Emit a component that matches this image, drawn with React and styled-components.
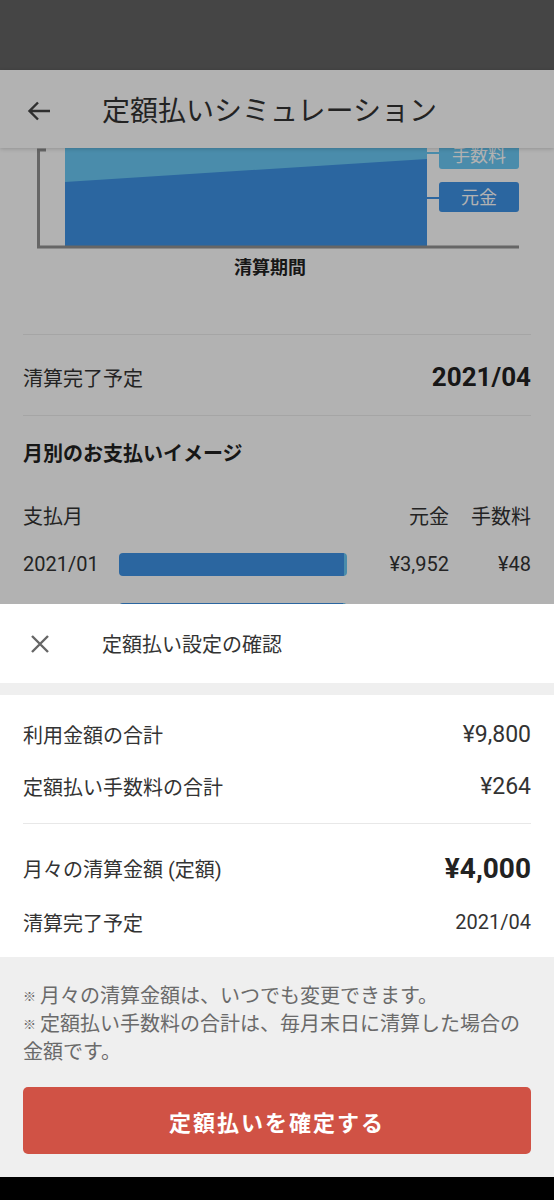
import React from "react";
import styled, { createGlobalStyle } from "styled-components";

const GlobalStyle = createGlobalStyle`
  html, body {
    margin: 0;
    padding: 0;
    background: #000;
  }
  body {
    font-family: Roboto, "Noto Sans CJK JP", sans-serif;
    color: #333;
  }
  * {
    box-sizing: border-box;
  }
`;

const PRINCIPAL = "#3e92e5";
const FEE = "#6ac9f5";
const AXIS = "#929292";

const Device = styled.div`
  width: 554px;
  height: 1200px;
  display: flex;
  flex-direction: column;
  overflow: hidden;
  background: #fff;
`;

const Screen = styled.div`
  position: relative;
  height: 1177px;
  display: flex;
  flex-direction: column;
  overflow: hidden;
  background: #fff;
`;

const StatusBar = styled.div`
  height: 70px;
  flex-shrink: 0;
  background: #636363;
`;

const AppBar = styled.header`
  position: relative;
  z-index: 1;
  height: 78px;
  flex-shrink: 0;
  display: flex;
  align-items: center;
  padding: 3px 0 0 27px;
  background: #fff;
  box-shadow: 0 1px 4px rgba(0, 0, 0, 0.18);
`;

const IconButton = styled.span`
  display: flex;
  align-items: center;
  justify-content: center;
  width: 24px;
  height: 24px;
  flex-shrink: 0;
`;

const AppTitle = styled.h1`
  margin: 2px 0 0 51px;
  font-size: 28px;
  font-weight: 400;
  color: #333;
  line-height: 1;
`;

const Content = styled.main`
  display: flex;
  flex-direction: column;
`;

const ChartBox = styled.div`
  height: 102px;
  flex-shrink: 0;
`;

const AxisLabel = styled.div`
  margin: 8px 0 56px;
  padding-right: 14px;
  text-align: center;
  font-size: 18px;
  font-weight: 700;
  line-height: 20px;
  color: #222;
`;

const Divider = styled.div`
  height: 1px;
  margin: 0 23px;
  background: #ececec;
`;

const SummaryRow = styled.div`
  height: 80px;
  padding: 4px 23px 0;
  display: flex;
  align-items: center;
  justify-content: space-between;
`;

const Label = styled.span`
  font-size: 20px;
  color: #333;
`;

const BigValue = styled.span`
  font-size: ${(p) => p.$size || 26}px;
  font-weight: 700;
  color: #222;
`;

const Value = styled.span`
  font-size: ${(p) => p.$size || 20}px;
  color: #333;
`;

const Heading = styled.h2`
  margin: 0;
  padding: 24px 23px 0;
  font-size: 20px;
  font-weight: 700;
  line-height: 28px;
  color: #222;
`;

const Table = styled.div`
  margin-top: 33px;
  padding: 0 23px;
`;

const TableRow = styled.div`
  display: grid;
  grid-template-columns: 96px 228px 1fr 82px;
  align-items: center;
  height: ${(p) => (p.$head ? 28 : 50)}px;
  margin-bottom: ${(p) => (p.$head ? 10 : 0)}px;
  font-size: 20px;
  color: #333;
`;

const Cell = styled.span`
  text-align: ${(p) => (p.$right ? "right" : "left")};
  white-space: nowrap;
`;

const BarTrack = styled.div`
  display: flex;
  height: 23px;
  border-radius: 4px;
  overflow: hidden;
`;

const BarSegment = styled.div`
  height: 100%;
  background: ${(p) => (p.$fee ? FEE : PRINCIPAL)};
`;

const Scrim = styled.div`
  position: absolute;
  inset: 0;
  z-index: 2;
  background: rgba(0, 0, 0, 0.3);
`;

const Sheet = styled.section`
  position: absolute;
  left: 0;
  right: 0;
  bottom: 0;
  z-index: 3;
  display: flex;
  flex-direction: column;
  background: #efefef;
`;

const SheetHeader = styled.div`
  height: 79px;
  display: flex;
  align-items: center;
  padding-left: 28px;
  background: #fff;
  margin-bottom: 12px;
`;

const SheetTitle = styled.h3`
  margin: 0 0 0 50px;
  font-size: 20px;
  font-weight: 400;
  color: #333;
`;

const Card = styled.div`
  background: #fff;
  padding: 0 23px;
`;

const Group = styled.div`
  padding: ${(p) => p.$pad};
`;

const InfoRow = styled.div`
  height: ${(p) => p.$h}px;
  display: flex;
  align-items: center;
  justify-content: space-between;
`;

const CardDivider = styled.div`
  height: 1px;
  background: #e8e8e8;
`;

const Footer = styled.div`
  padding: 25px 23px 23px;
`;

const Note = styled.p`
  margin: 0;
  font-size: 20px;
  line-height: 28px;
  color: #6a6a6a;
`;

const Mark = styled.span`
  display: inline-block;
  width: 17px;
  font-size: 13px;
  line-height: 1;
  vertical-align: 2px;
`;

const ConfirmButton = styled.button`
  display: block;
  width: 100%;
  height: 67px;
  margin-top: 21px;
  border: none;
  border-radius: 5px;
  background: #d05245;
  color: #fff;
  font-family: Roboto, "Noto Sans CJK JP", sans-serif;
  font-size: 22px;
  font-weight: 700;
  letter-spacing: 2px;
  cursor: pointer;
`;

const NavBar = styled.div`
  flex: 1;
  background: #000;
`;

const months = [
  { month: "2021/01", principal: 3952, fee: 48 },
  { month: "2021/02", principal: 3931, fee: 69 },
  { month: "2021/03", principal: 1917, fee: 83 },
];

function BackArrow() {
  return (
    <svg width="24" height="22" viewBox="0 0 24 22" fill="none">
      <path
        d="M23 11H2.8M11 2.5L2.5 11L11 19.5"
        stroke="#444"
        strokeWidth="2.4"
      />
    </svg>
  );
}

function CloseIcon() {
  return (
    <svg width="20" height="20" viewBox="0 0 20 20" fill="none">
      <path d="M2 2L18 18M18 2L2 18" stroke="#666" strokeWidth="2.4" />
    </svg>
  );
}

function PeriodChart() {
  const font = 'Roboto, "Noto Sans CJK JP", sans-serif';
  return (
    <svg width="554" height="102" viewBox="0 0 554 102">
      <rect x="65" y="0" width="362" height="98" fill={PRINCIPAL} />
      <polygon points="65,0 427,0 427,11 65,34" fill={FEE} />
      <path d="M46 2H38.5V98.5" stroke={AXIS} strokeWidth="3" fill="none" />
      <path d="M37 99H519" stroke={AXIS} strokeWidth="3" />
      <path d="M427 5H440" stroke={FEE} strokeWidth="2" />
      <path d="M427 50H440" stroke={PRINCIPAL} strokeWidth="2" />
      <rect x="439" y="-9" width="80" height="30" rx="3" fill={FEE} />
      <text
        x="479"
        y="7"
        fill="#fff"
        fontSize="18"
        fontFamily={font}
        textAnchor="middle"
        dominantBaseline="central"
      >
        手数料
      </text>
      <rect x="439" y="34" width="80" height="30" rx="3" fill={PRINCIPAL} />
      <text
        x="479"
        y="49"
        fill="#fff"
        fontSize="18"
        fontFamily={font}
        textAnchor="middle"
        dominantBaseline="central"
      >
        元金
      </text>
    </svg>
  );
}

const yen = (n) => "¥" + n.toLocaleString("en-US");

export default function App() {
  return (
    <Device>
      <GlobalStyle />
      <Screen>
        <StatusBar />
        <AppBar>
          <IconButton>
            <BackArrow />
          </IconButton>
          <AppTitle>定額払いシミュレーション</AppTitle>
        </AppBar>
        <Content>
          <ChartBox>
            <PeriodChart />
          </ChartBox>
          <AxisLabel>清算期間</AxisLabel>
          <Divider />
          <SummaryRow>
            <Label>清算完了予定</Label>
            <BigValue>2021/04</BigValue>
          </SummaryRow>
          <Divider />
          <Heading>月別のお支払いイメージ</Heading>
          <Table>
            <TableRow $head>
              <Cell>支払月</Cell>
              <span />
              <Cell $right>元金</Cell>
              <Cell $right>手数料</Cell>
            </TableRow>
            {months.map((m) => {
              const total = m.principal + m.fee;
              return (
                <TableRow key={m.month}>
                  <Cell>{m.month}</Cell>
                  <BarTrack style={{ width: `${(total / 4000) * 100}%` }}>
                    <BarSegment
                      style={{ width: `${(m.principal / total) * 100}%` }}
                    />
                    <BarSegment
                      $fee
                      style={{ width: `${(m.fee / total) * 100}%` }}
                    />
                  </BarTrack>
                  <Cell $right>{yen(m.principal)}</Cell>
                  <Cell $right>{yen(m.fee)}</Cell>
                </TableRow>
              );
            })}
          </Table>
        </Content>
        <Scrim />
        <Sheet>
          <SheetHeader>
            <IconButton>
              <CloseIcon />
            </IconButton>
            <SheetTitle>定額払い設定の確認</SheetTitle>
          </SheetHeader>
          <Card>
            <Group $pad="13px 0 11px">
              <InfoRow $h={52}>
                <Label>利用金額の合計</Label>
                <Value $size={23}>¥9,800</Value>
              </InfoRow>
              <InfoRow $h={52}>
                <Label>定額払い手数料の合計</Label>
                <Value $size={23}>¥264</Value>
              </InfoRow>
            </Group>
            <CardDivider />
            <Group $pad="17px 0 8px">
              <InfoRow $h={54}>
                <Label>月々の清算金額 (定額)</Label>
                <BigValue $size={28}>¥4,000</BigValue>
              </InfoRow>
              <InfoRow $h={54}>
                <Label>清算完了予定</Label>
                <Value>2021/04</Value>
              </InfoRow>
            </Group>
          </Card>
          <Footer>
            <Note>
              <Mark>※</Mark>月々の清算金額は、いつでも変更できます。
            </Note>
            <Note>
              <Mark>※</Mark>
              定額払い手数料の合計は、毎月末日に清算した場合の金額です。
            </Note>
            <ConfirmButton>定額払いを確定する</ConfirmButton>
          </Footer>
        </Sheet>
      </Screen>
      <NavBar />
    </Device>
  );
}
